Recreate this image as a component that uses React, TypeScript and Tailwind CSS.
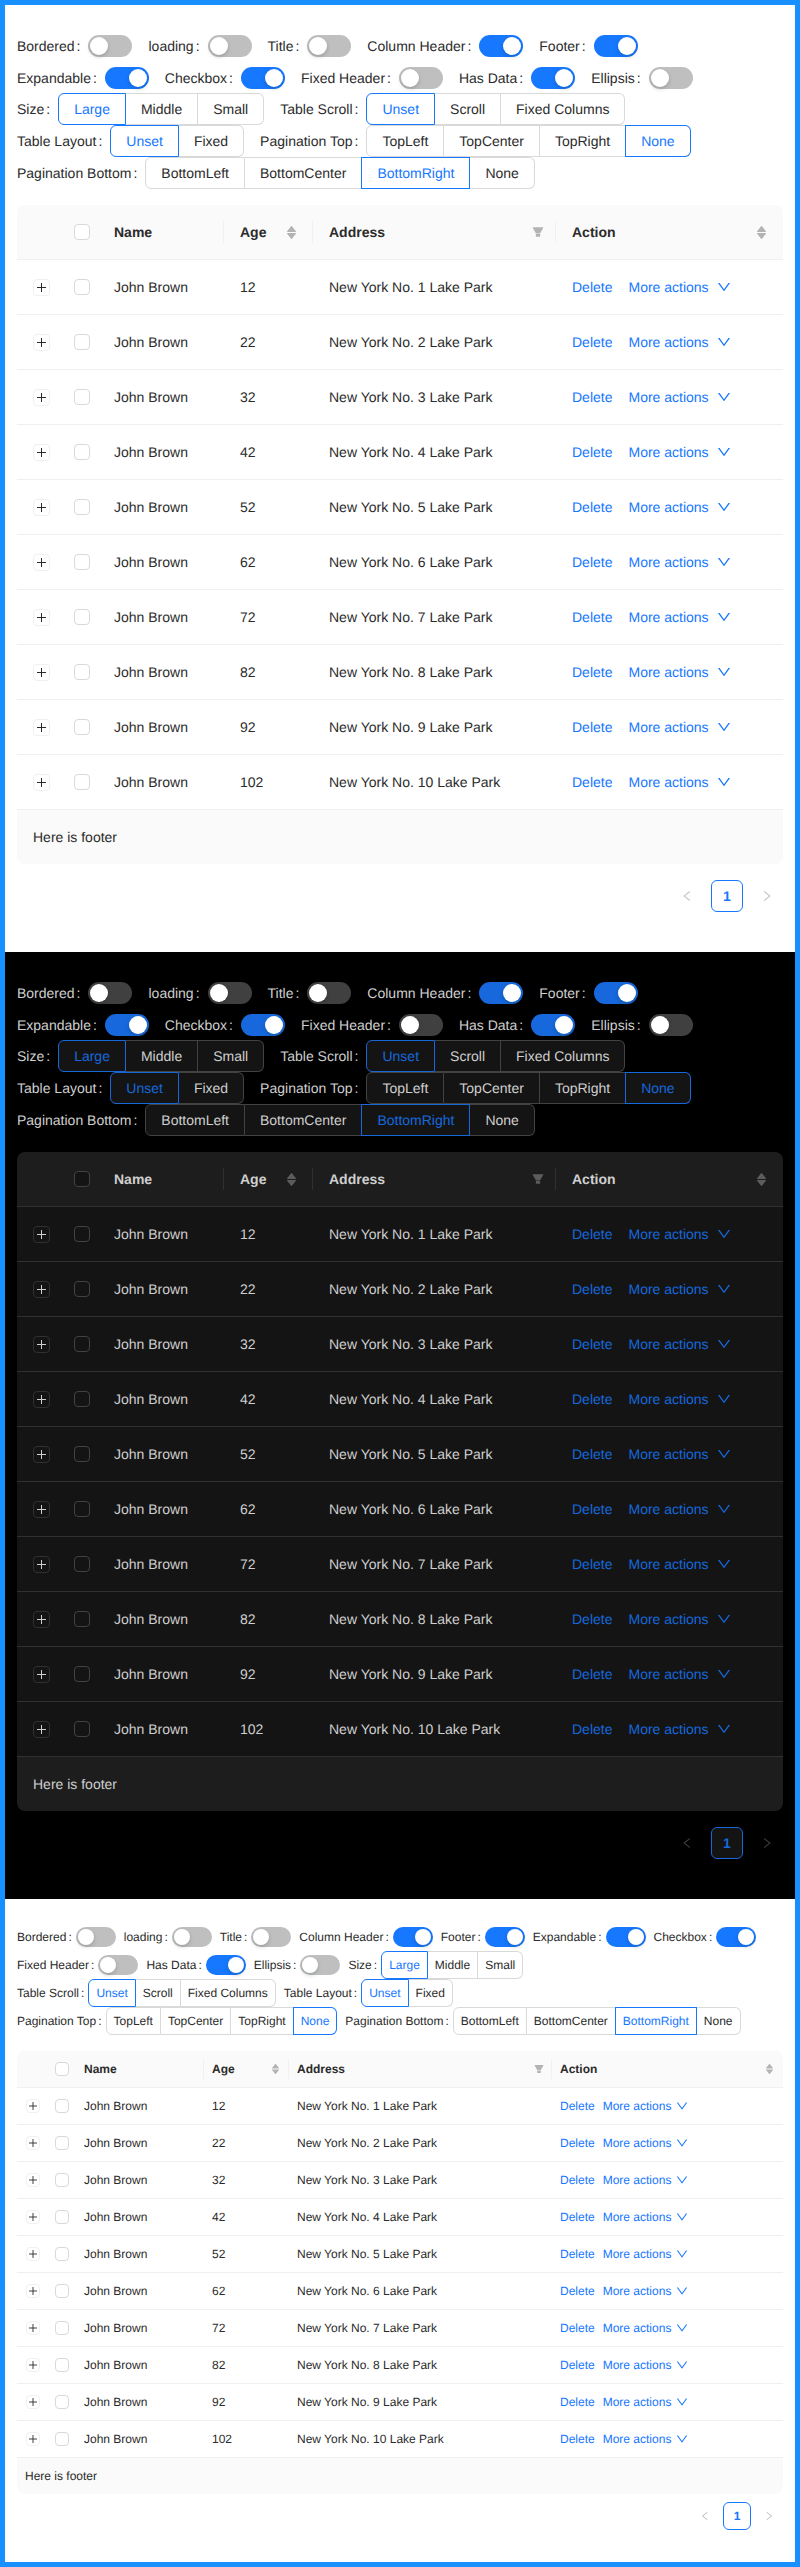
import React from 'react';

type Theme = {
    page: string;
    text: string;
    primary: string;
    switchOn: string;
    switchOff: string;
    btn: string;
    btnActive: string;
    head: string;
    body: string;
    line: string;
    sep: string;
    box: string;
    icon: string;
    disabled: string;
    pageItem: string;
};

const light: Theme = {
    page: 'bg-white',
    text: 'text-[#2b2b2b]',
    primary: 'text-[#1677ff]',
    switchOn: 'bg-[#1677ff]',
    switchOff: 'bg-[#bfbfbf]',
    btn: 'bg-white border-[#d9d9d9] text-[#2b2b2b]',
    btnActive: 'bg-white border-[#1677ff] text-[#1677ff] shadow-[-1px_0_0_0_#1677ff]',
    head: 'bg-[#fafafa]',
    body: 'bg-white',
    line: 'border-[#f0f0f0]',
    sep: 'bg-[#f0f0f0]',
    box: 'bg-white border-[#d9d9d9]',
    icon: 'text-[#b3b3b3]',
    disabled: 'text-[#bfbfbf]',
    pageItem: 'bg-white border-[#1677ff] text-[#1677ff]',
};

const dark: Theme = {
    page: 'bg-black',
    text: 'text-[#cfcfcf]',
    primary: 'text-[#1668dc]',
    switchOn: 'bg-[#1668dc]',
    switchOff: 'bg-[#404040]',
    btn: 'bg-[#141414] border-[#424242] text-[#cfcfcf]',
    btnActive: 'bg-[#141414] border-[#1668dc] text-[#1668dc] shadow-[-1px_0_0_0_#1668dc]',
    head: 'bg-[#1d1d1d]',
    body: 'bg-[#141414]',
    line: 'border-[#303030]',
    sep: 'bg-[#303030]',
    box: 'bg-[#141414] border-[#424242]',
    icon: 'text-[#5c5c5c]',
    disabled: 'text-[#404040]',
    pageItem: 'bg-[#141414] border-[#1668dc] text-[#1668dc]',
};

const large = {
    section: 'pt-[25px] pb-[24px] px-3 text-[14px] leading-[22px]',
    switchItem: 'flex items-start h-[31.5px] pt-[5px] mr-4',
    groupItem: 'flex items-center h-8 mr-4',
    colon: 'ml-[2px] mr-2',
    switchBox: 'w-11 h-[22px]',
    handle: 'w-[18px] h-[18px]',
    btn: 'h-8 px-[15px] leading-[30px]',
    table: 'mt-4',
    cols: 'grid-cols-[48px_33px_126px_89px_243px_1fr]',
    row: 'h-[55px]',
    footer: 'h-[54px] px-4',
    pad: 'pl-4',
    sep: 'h-[22px]',
    sorter: 'w-[9px] h-[13px]',
    sortGap: 'mr-4',
    sortEnd: 'mr-[17px]',
    filter: 'w-3 h-3 mr-[11px]',
    expand: 'w-[17px] h-[17px]',
    plus: 'w-[9px] h-[9px]',
    check: 'w-4 h-4',
    actions: 'gap-4',
    down: 'w-[14px] h-[14px] ml-2',
    pagination: 'mt-4 mb-4 gap-2',
    pageBtn: 'w-8 h-8',
    pageIcon: 'w-3 h-3',
};

const small: typeof large = {
    section: 'pt-[24px] pb-[24px] px-3 text-[12px] leading-[20px]',
    switchItem: 'flex items-center h-7 mr-2',
    groupItem: 'flex items-center h-7 mr-2',
    colon: 'ml-[2px] mr-1',
    switchBox: 'w-10 h-5',
    handle: 'w-4 h-4',
    btn: 'h-7 px-[7px] leading-[26px]',
    table: 'mt-4',
    cols: 'grid-cols-[31px_28px_128px_85px_263px_1fr]',
    row: 'h-[37px]',
    footer: 'h-[36px] px-2',
    pad: 'pl-2',
    sep: 'h-[19px]',
    sorter: 'w-[7px] h-3',
    sortGap: 'mr-[9px]',
    sortEnd: 'mr-[10px]',
    filter: 'w-[10px] h-[10px] mr-[7px]',
    expand: 'w-[14px] h-[14px]',
    plus: 'w-2 h-2',
    check: 'w-[14px] h-[14px]',
    actions: 'gap-2',
    down: 'w-3 h-3 ml-[5px]',
    pagination: 'mt-2 mb-2 gap-1',
    pageBtn: 'w-7 h-7',
    pageIcon: 'w-[10px] h-[10px]',
};

type Size = typeof large;

const SorterIcon = ({ className }: { className: string }) => (
    <svg viewBox="0 0 9 13" fill="currentColor" className={className}>
        <path d="M4.1.2a.5.5 0 01.8 0l4 5a.5.5 0 01-.4.8H.5a.5.5 0 01-.4-.8z" />
        <path d="M.5 7h8a.5.5 0 01.4.8l-4 5a.5.5 0 01-.8 0l-4-5A.5.5 0 01.5 7z" />
    </svg>
);

const FilterIcon = ({ className }: { className: string }) => (
    <svg viewBox="64 64 896 896" fill="currentColor" className={className}>
        <path d="M349 838c0 17.7 14.2 32 31.8 32h262.4c17.6 0 31.8-14.3 31.8-32V642H349v196zm531.1-684H143.9c-24.5 0-39.8 26.7-27.5 48L349 597h326l232.6-395c12.1-21.3-3.2-48-27.5-48z" />
    </svg>
);

const DownIcon = ({ className }: { className: string }) => (
    <svg viewBox="64 64 896 896" fill="currentColor" className={className}>
        <path d="M884 256h-75c-5.1 0-9.9 2.5-12.9 6.6L512 654.2 227.9 262.6c-3-4.1-7.8-6.6-12.9-6.6h-75c-6.5 0-10.3 7.4-6.5 12.7l352.6 486.1c12.8 17.6 39 17.6 51.7 0l352.6-486.1c3.9-5.3.1-12.7-6.4-12.7z" />
    </svg>
);

const LeftIcon = ({ className }: { className: string }) => (
    <svg viewBox="64 64 896 896" fill="currentColor" className={className}>
        <path d="M724 218.3V141c0-6.7-7.7-10.4-12.9-6.3L260.3 486.8a31.86 31.86 0 000 50.3l450.8 352.1c5.3 4.1 12.9.4 12.9-6.3v-77.3c0-4.9-2.3-9.6-6.1-12.6l-360-281 360-281.1c3.8-3 6.1-7.7 6.1-12.6z" />
    </svg>
);

const RightIcon = ({ className }: { className: string }) => (
    <svg viewBox="64 64 896 896" fill="currentColor" className={className}>
        <path d="M765.7 486.8L314.9 134.7A7.97 7.97 0 00302 141v77.3c0 4.9 2.3 9.6 6.1 12.6l360 281.1-360 281.1c-3.9 3-6.1 7.7-6.1 12.6V883c0 6.7 7.7 10.4 12.9 6.3l450.8-352.1a31.96 31.96 0 000-50.4z" />
    </svg>
);

const PlusIcon = ({ className }: { className: string }) => (
    <svg viewBox="0 0 9 9" fill="currentColor" className={className}>
        <rect x="0" y="4" width="9" height="1" />
        <rect x="4" y="0" width="1" height="9" />
    </svg>
);

const switchList = [
    { label: 'Bordered', on: false },
    { label: 'loading', on: false },
    { label: 'Title', on: false },
    { label: 'Column Header', on: true },
    { label: 'Footer', on: true },
    { label: 'Expandable', on: true },
    { label: 'Checkbox', on: true },
    { label: 'Fixed Header', on: false },
    { label: 'Has Data', on: true },
    { label: 'Ellipsis', on: false },
];

const groups = [
    { label: 'Size', options: ['Large', 'Middle', 'Small'], value: 'Large' },
    { label: 'Table Scroll', options: ['Unset', 'Scroll', 'Fixed Columns'], value: 'Unset' },
    { label: 'Table Layout', options: ['Unset', 'Fixed'], value: 'Unset' },
    { label: 'Pagination Top', options: ['TopLeft', 'TopCenter', 'TopRight', 'None'], value: 'None' },
    { label: 'Pagination Bottom', options: ['BottomLeft', 'BottomCenter', 'BottomRight', 'None'], value: 'BottomRight' },
];

const ages = [12, 22, 32, 42, 52, 62, 72, 82, 92, 102];

const Controls = ({ t, s }: { t: Theme; s: Size }) => (
    <div className="flex flex-wrap">
        {switchList.map((item) => (
            <div key={item.label} className={s.switchItem}>
                <span className={t.text}>{item.label}</span>
                <span className={`${t.text} ${s.colon}`}>:</span>
                <span className={`flex p-[2px] rounded-full ${s.switchBox} ${item.on ? `justify-end ${t.switchOn}` : t.switchOff}`}>
                    <span className={`rounded-full bg-white shadow-[0_2px_4px_0_rgba(0,35,11,0.2)] ${s.handle}`} />
                </span>
            </div>
        ))}
        {groups.map((group) => (
            <div key={group.label} className={s.groupItem}>
                <span className={t.text}>{group.label}</span>
                <span className={`${t.text} ${s.colon}`}>:</span>
                <div className="flex">
                    {group.options.map((option, i) => {
                        const active = option === group.value;
                        return (
                            <span
                                key={option}
                                className={`border ${s.btn} ${active ? t.btnActive : t.btn} ${i === 0 ? 'rounded-l-md shadow-none' : 'border-l-0'} ${i === group.options.length - 1 ? 'rounded-r-md' : ''}`}
                            >
                                {option}
                            </span>
                        );
                    })}
                </div>
            </div>
        ))}
    </div>
);

const DataTable = ({ t, s }: { t: Theme; s: Size }) => (
    <div className={`rounded-lg overflow-hidden ${s.table}`}>
        <div className={`grid items-center border-b font-bold ${s.cols} ${s.row} ${t.head} ${t.line} ${t.text}`}>
            <div />
            <div className="flex justify-center">
                <span className={`border rounded ${s.check} ${t.box}`} />
            </div>
            <div className={`flex items-center ${s.pad}`}>
                <span className="flex-1">Name</span>
                <span className={`w-px ${s.sep} ${t.sep}`} />
            </div>
            <div className={`flex items-center ${s.pad}`}>
                <span className="flex-1">Age</span>
                <span className={`${t.icon} ${s.sortGap}`}>
                    <SorterIcon className={`block ${s.sorter}`} />
                </span>
                <span className={`w-px ${s.sep} ${t.sep}`} />
            </div>
            <div className={`flex items-center ${s.pad}`}>
                <span className="flex-1">Address</span>
                <span className={t.icon}>
                    <FilterIcon className={`block ${s.filter}`} />
                </span>
                <span className={`w-px ${s.sep} ${t.sep}`} />
            </div>
            <div className={`flex items-center ${s.pad}`}>
                <span className="flex-1">Action</span>
                <span className={`${t.icon} ${s.sortEnd}`}>
                    <SorterIcon className={`block ${s.sorter}`} />
                </span>
            </div>
        </div>
        {ages.map((age, i) => (
            <div key={age} className={`grid items-center border-b ${s.cols} ${s.row} ${t.body} ${t.line} ${t.text}`}>
                <div className="flex justify-center">
                    <span className={`flex items-center justify-center border rounded ${s.expand} ${t.line}`}>
                        <PlusIcon className={s.plus} />
                    </span>
                </div>
                <div className="flex justify-center">
                    <span className={`border rounded ${s.check} ${t.box}`} />
                </div>
                <div className={s.pad}>John Brown</div>
                <div className={s.pad}>{age}</div>
                <div className={s.pad}>New York No. {i + 1} Lake Park</div>
                <div className={`flex items-center ${s.pad} ${s.actions} ${t.primary}`}>
                    <span>Delete</span>
                    <span className="flex items-center">
                        More actions
                        <DownIcon className={s.down} />
                    </span>
                </div>
            </div>
        ))}
        <div className={`flex items-center ${s.footer} ${t.head} ${t.text}`}>Here is footer</div>
    </div>
);

const Pagination = ({ t, s }: { t: Theme; s: Size }) => (
    <div className={`flex justify-end ${s.pagination}`}>
        <span className={`flex items-center justify-center ${s.pageBtn} ${t.disabled}`}>
            <LeftIcon className={s.pageIcon} />
        </span>
        <span className={`flex items-center justify-center border rounded-md font-bold ${s.pageBtn} ${t.pageItem}`}>1</span>
        <span className={`flex items-center justify-center ${s.pageBtn} ${t.disabled}`}>
            <RightIcon className={s.pageIcon} />
        </span>
    </div>
);

const Demo = ({ t, s }: { t: Theme; s: Size }) => (
    <section className={`${t.page} ${s.section}`}>
        <Controls t={t} s={s} />
        <DataTable t={t} s={s} />
        <Pagination t={t} s={s} />
    </section>
);

export default function App() {
    return (
        <div className="border-[5px] border-[#1890ff] font-['Liberation_Sans',Arial,sans-serif] antialiased [text-rendering:geometricPrecision]">
            <Demo t={light} s={large} />
            <Demo t={dark} s={large} />
            <Demo t={light} s={small} />
        </div>
    );
}
